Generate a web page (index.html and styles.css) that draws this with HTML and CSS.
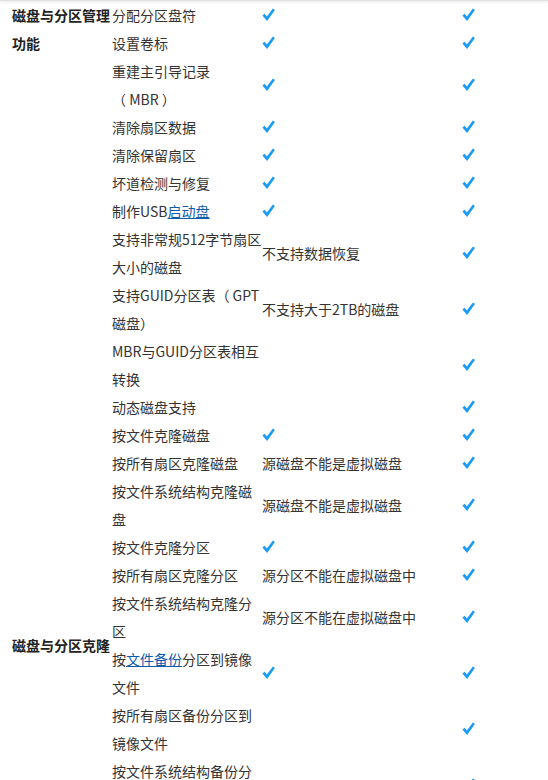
FILE: index.html
```html
<!DOCTYPE html>
<html lang="zh-CN">
<head>
<meta charset="utf-8">
<title>功能对比</title>
<link rel="stylesheet" href="styles.css">
</head>
<body>
<div class="topbar"></div>
<table class="cmp">
  <colgroup>
    <col class="c1"><col class="c2"><col class="c3"><col class="c4">
  </colgroup>
  <tbody>
    <tr>
      <th class="cat cat-top" rowspan="10">磁盘与分区管理功能</th>
      <td>分配分区盘符</td>
      <td><svg class="ok" viewBox="0 0 13 14"><path d="M0.4 7.6 L2.6 5.8 L4.9 8.4 L10.9 0.4 L12.9 2.1 L5.1 13 Z"/></svg></td>
      <td><svg class="ok" viewBox="0 0 13 14"><path d="M0.4 7.6 L2.6 5.8 L4.9 8.4 L10.9 0.4 L12.9 2.1 L5.1 13 Z"/></svg></td>
    </tr>
    <tr>
      <td>设置卷标</td>
      <td><svg class="ok" viewBox="0 0 13 14"><path d="M0.4 7.6 L2.6 5.8 L4.9 8.4 L10.9 0.4 L12.9 2.1 L5.1 13 Z"/></svg></td>
      <td><svg class="ok" viewBox="0 0 13 14"><path d="M0.4 7.6 L2.6 5.8 L4.9 8.4 L10.9 0.4 L12.9 2.1 L5.1 13 Z"/></svg></td>
    </tr>
    <tr>
      <td>重建主引导记录<br>（ MBR ）</td>
      <td><svg class="ok" viewBox="0 0 13 14"><path d="M0.4 7.6 L2.6 5.8 L4.9 8.4 L10.9 0.4 L12.9 2.1 L5.1 13 Z"/></svg></td>
      <td><svg class="ok" viewBox="0 0 13 14"><path d="M0.4 7.6 L2.6 5.8 L4.9 8.4 L10.9 0.4 L12.9 2.1 L5.1 13 Z"/></svg></td>
    </tr>
    <tr>
      <td>清除扇区数据</td>
      <td><svg class="ok" viewBox="0 0 13 14"><path d="M0.4 7.6 L2.6 5.8 L4.9 8.4 L10.9 0.4 L12.9 2.1 L5.1 13 Z"/></svg></td>
      <td><svg class="ok" viewBox="0 0 13 14"><path d="M0.4 7.6 L2.6 5.8 L4.9 8.4 L10.9 0.4 L12.9 2.1 L5.1 13 Z"/></svg></td>
    </tr>
    <tr>
      <td>清除保留扇区</td>
      <td><svg class="ok" viewBox="0 0 13 14"><path d="M0.4 7.6 L2.6 5.8 L4.9 8.4 L10.9 0.4 L12.9 2.1 L5.1 13 Z"/></svg></td>
      <td><svg class="ok" viewBox="0 0 13 14"><path d="M0.4 7.6 L2.6 5.8 L4.9 8.4 L10.9 0.4 L12.9 2.1 L5.1 13 Z"/></svg></td>
    </tr>
    <tr>
      <td>坏道检测与修复</td>
      <td><svg class="ok" viewBox="0 0 13 14"><path d="M0.4 7.6 L2.6 5.8 L4.9 8.4 L10.9 0.4 L12.9 2.1 L5.1 13 Z"/></svg></td>
      <td><svg class="ok" viewBox="0 0 13 14"><path d="M0.4 7.6 L2.6 5.8 L4.9 8.4 L10.9 0.4 L12.9 2.1 L5.1 13 Z"/></svg></td>
    </tr>
    <tr>
      <td>制作USB<a class="lnk" href="#">启动盘</a></td>
      <td><svg class="ok" viewBox="0 0 13 14"><path d="M0.4 7.6 L2.6 5.8 L4.9 8.4 L10.9 0.4 L12.9 2.1 L5.1 13 Z"/></svg></td>
      <td><svg class="ok" viewBox="0 0 13 14"><path d="M0.4 7.6 L2.6 5.8 L4.9 8.4 L10.9 0.4 L12.9 2.1 L5.1 13 Z"/></svg></td>
    </tr>
    <tr>
      <td>支持非常规512字节扇区大小的磁盘</td>
      <td>不支持数据恢复</td>
      <td><svg class="ok" viewBox="0 0 13 14"><path d="M0.4 7.6 L2.6 5.8 L4.9 8.4 L10.9 0.4 L12.9 2.1 L5.1 13 Z"/></svg></td>
    </tr>
    <tr>
      <td>支持GUID分区表（ GPT<br>磁盘）</td>
      <td>不支持大于2TB的磁盘</td>
      <td><svg class="ok" viewBox="0 0 13 14"><path d="M0.4 7.6 L2.6 5.8 L4.9 8.4 L10.9 0.4 L12.9 2.1 L5.1 13 Z"/></svg></td>
    </tr>
    <tr>
      <td>MBR与GUID分区表相互转换</td>
      <td></td>
      <td><svg class="ok" viewBox="0 0 13 14"><path d="M0.4 7.6 L2.6 5.8 L4.9 8.4 L10.9 0.4 L12.9 2.1 L5.1 13 Z"/></svg></td>
    </tr>
    <tr>
      <td class="spacer-cat"></td>
      <td>动态磁盘支持</td>
      <td></td>
      <td><svg class="ok" viewBox="0 0 13 14"><path d="M0.4 7.6 L2.6 5.8 L4.9 8.4 L10.9 0.4 L12.9 2.1 L5.1 13 Z"/></svg></td>
    </tr>
    <tr>
      <th class="cat" rowspan="10">磁盘与分区克隆</th>
      <td>按文件克隆磁盘</td>
      <td><svg class="ok" viewBox="0 0 13 14"><path d="M0.4 7.6 L2.6 5.8 L4.9 8.4 L10.9 0.4 L12.9 2.1 L5.1 13 Z"/></svg></td>
      <td><svg class="ok" viewBox="0 0 13 14"><path d="M0.4 7.6 L2.6 5.8 L4.9 8.4 L10.9 0.4 L12.9 2.1 L5.1 13 Z"/></svg></td>
    </tr>
    <tr>
      <td>按所有扇区克隆磁盘</td>
      <td>源磁盘不能是虚拟磁盘</td>
      <td><svg class="ok" viewBox="0 0 13 14"><path d="M0.4 7.6 L2.6 5.8 L4.9 8.4 L10.9 0.4 L12.9 2.1 L5.1 13 Z"/></svg></td>
    </tr>
    <tr>
      <td>按文件系统结构克隆磁盘</td>
      <td>源磁盘不能是虚拟磁盘</td>
      <td><svg class="ok" viewBox="0 0 13 14"><path d="M0.4 7.6 L2.6 5.8 L4.9 8.4 L10.9 0.4 L12.9 2.1 L5.1 13 Z"/></svg></td>
    </tr>
    <tr>
      <td>按文件克隆分区</td>
      <td><svg class="ok" viewBox="0 0 13 14"><path d="M0.4 7.6 L2.6 5.8 L4.9 8.4 L10.9 0.4 L12.9 2.1 L5.1 13 Z"/></svg></td>
      <td><svg class="ok" viewBox="0 0 13 14"><path d="M0.4 7.6 L2.6 5.8 L4.9 8.4 L10.9 0.4 L12.9 2.1 L5.1 13 Z"/></svg></td>
    </tr>
    <tr>
      <td>按所有扇区克隆分区</td>
      <td>源分区不能在虚拟磁盘中</td>
      <td><svg class="ok" viewBox="0 0 13 14"><path d="M0.4 7.6 L2.6 5.8 L4.9 8.4 L10.9 0.4 L12.9 2.1 L5.1 13 Z"/></svg></td>
    </tr>
    <tr>
      <td>按文件系统结构克隆分区</td>
      <td>源分区不能在虚拟磁盘中</td>
      <td><svg class="ok" viewBox="0 0 13 14"><path d="M0.4 7.6 L2.6 5.8 L4.9 8.4 L10.9 0.4 L12.9 2.1 L5.1 13 Z"/></svg></td>
    </tr>
    <tr>
      <td>按<a class="lnk" href="#">文件备份</a>分区到镜像文件</td>
      <td><svg class="ok" viewBox="0 0 13 14"><path d="M0.4 7.6 L2.6 5.8 L4.9 8.4 L10.9 0.4 L12.9 2.1 L5.1 13 Z"/></svg></td>
      <td><svg class="ok" viewBox="0 0 13 14"><path d="M0.4 7.6 L2.6 5.8 L4.9 8.4 L10.9 0.4 L12.9 2.1 L5.1 13 Z"/></svg></td>
    </tr>
    <tr>
      <td>按所有扇区备份分区到镜像文件</td>
      <td></td>
      <td><svg class="ok" viewBox="0 0 13 14"><path d="M0.4 7.6 L2.6 5.8 L4.9 8.4 L10.9 0.4 L12.9 2.1 L5.1 13 Z"/></svg></td>
    </tr>
    <tr>
      <td>按文件系统结构备份分区到镜像文件</td>
      <td></td>
      <td><svg class="ok" viewBox="0 0 13 14"><path d="M0.4 7.6 L2.6 5.8 L4.9 8.4 L10.9 0.4 L12.9 2.1 L5.1 13 Z"/></svg></td>
    </tr>
    <tr>
      <td>按文件备份磁盘到镜像文件</td>
      <td><svg class="ok" viewBox="0 0 13 14"><path d="M0.4 7.6 L2.6 5.8 L4.9 8.4 L10.9 0.4 L12.9 2.1 L5.1 13 Z"/></svg></td>
      <td><svg class="ok" viewBox="0 0 13 14"><path d="M0.4 7.6 L2.6 5.8 L4.9 8.4 L10.9 0.4 L12.9 2.1 L5.1 13 Z"/></svg></td>
    </tr>
  </tbody>
</table>
</body>
</html>
```

FILE: styles.css
```css
html, body {
  margin: 0;
  padding: 0;
  background: #fff;
}
body {
  font-family: "Noto Sans CJK SC", "Noto Sans", sans-serif;
  font-size: 14px;
  line-height: 28px;
  color: #333;
}
.topbar {
  position: relative;
  z-index: 2;
  height: 1px;
  background: #e2e2e2;
  box-shadow: 0 1px 3px rgba(0, 0, 0, 0.18);
}
.cmp {
  border-collapse: collapse;
  border-spacing: 0;
  table-layout: fixed;
  width: 536px;
  margin-left: 12px;
}
.c1 { width: 100px; }
.c2 { width: 150px; }
.c3 { width: 200px; }
.c4 { width: 86px; }
.cmp td, .cmp th {
  padding: 0;
  vertical-align: middle;
  text-align: left;
  word-break: break-all;
}
.cmp .cat {
  font-weight: bold;
  color: #222;
}
.cmp .cat-top {
  vertical-align: top;
}
.spacer-cat {
  height: 28px;
}
.lnk {
  color: #0b5cad;
  text-decoration: underline;
}
.ok {
  display: block;
  width: 13px;
  height: 14px;
  fill: #1a9bf5;
}
```
